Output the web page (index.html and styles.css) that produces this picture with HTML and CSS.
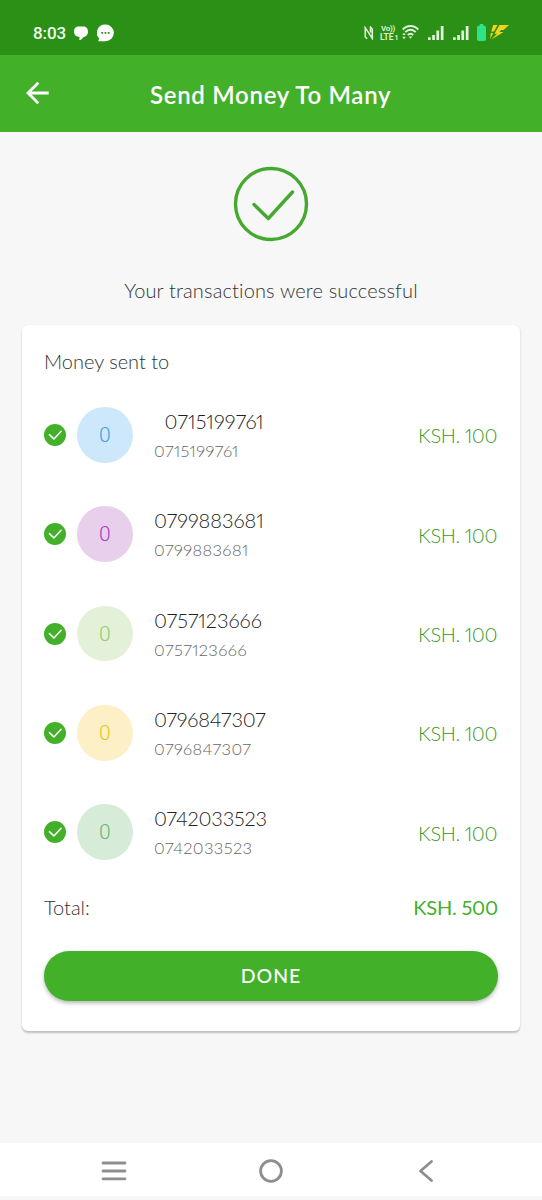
FILE: index.html
```html
<!DOCTYPE html>
<html lang="en">
<head>
<meta charset="utf-8">
<title>Send Money To Many</title>
<link rel="stylesheet" href="styles.css">
</head>
<body>
<svg width="0" height="0" class="defs">
  <symbol id="tick" viewBox="0 0 22 22"><circle cx="11" cy="11" r="11" fill="#43b02a"/><path d="M5.400 10.600l4.500 4.300 7.200-7.600" fill="none" stroke="#fff" stroke-width="1.500" stroke-linecap="round" stroke-linejoin="round"/></symbol>
  <symbol id="signal" viewBox="0 0 16 15"><path d="M0 11.300h2.700V14H0zM4.200 9h2.700v5H4.200zM8.400 4.600h2.700V14H8.400zM12.800 0h2.700v14h-2.700z" fill="#e2f5dc"/></symbol>
</svg>
<header class="status">
  <span class="clock">8:03</span>
  <svg class="bubble" width="14" height="15" viewBox="0 0 14 15"><path d="M4.200.4h5.400C12.500.4 14 2.800 14 5.700s-1.600 5-4.500 5.200c-1 1.600-2.200 2.600-3.500 3.200-.5.200-.8-.1-.7-.6l.3-2.500C2 10.700 0 8.700 0 5.700S1.500.4 4.200.4z" fill="#fff"/></svg>
  <svg class="chat" width="17" height="18" viewBox="0 0 17 18"><path d="M8.500.5a8.300 8.300 0 1 1 0 16.700H1.700c-.6 0-.6-.5-.3-.9l.8-1.700A8.300 8.300 0 0 1 8.500.500z" fill="#fff"/><path d="M4.300 8h1.800v1.800H4.300zM7.600 8h1.800v1.800H7.600zM10.800 8h1.800v1.800h-1.800z" fill="#2b9116"/></svg>
  <svg class="nfc" width="10" height="14" viewBox="0 0 10 14"><path d="M3.200 12.800L1.200 11V1.700L8.300 12.300V3L6.500 1.200V6.500" fill="none" stroke="#e2f5dc" stroke-width="1.500"/></svg>
  <span class="volte"><span class="vo">Vo))</span><span class="lte">LTE<small>1</small></span></span>
  <svg class="wifi" width="17" height="15" viewBox="0 0 17 15"><g fill="none" stroke="#e2f5dc" stroke-width="1.900"><path d="M.7 4.500C5-.2 12-.2 16.300 4.500M3.300 7.200c3-3.200 7.400-3.200 10.400 0M5.800 10c1.600-1.700 3.800-1.700 5.400 0"/></g><path d="M6.700 11.500h3.600l-1.800 2.300zM2 7.700l1.800 2.400H.3zM2 14.300L.3 11.800h3.500z" fill="#e2f5dc"/></svg>
  <svg class="sig1" width="16" height="15"><use href="#signal"/></svg>
  <svg class="sig2" width="16" height="15"><use href="#signal"/></svg>
  <svg class="battery" width="9" height="17" viewBox="0 0 9 17"><path d="M2.700 0h3.600v1.500C8 1.500 9 2.200 9 3.500V15c0 1.300-.7 2-2 2H2c-1.300 0-2-.7-2-2V3.500c0-1.300 1-2 2.700-2z" fill="#2ee388"/></svg>
  <svg class="bolt" width="20" height="15" viewBox="0 0 20 15"><path d="M3.200 0h4.300L4 6.500H1.200zM9.500 0H19l-5.500 5h-2.500L9.500 7h4L1.500 14.500 7 8.800H4.500zM.8 8h2.500L.2 14z" fill="#f5d21c"/></svg>
</header>
<div class="appbar">
  <svg class="back" width="24" height="24" viewBox="0 0 24 24"><path d="M22.700 12H2.500M12.300 1.800L2 12l10.300 10.200" fill="none" stroke="#fff" stroke-width="2.800"/></svg>
  <h1>Send Money To Many</h1>
</div>
<main>
  <svg class="done-mark" width="76" height="76" viewBox="0 0 76 76"><g fill="none" stroke="#45a92f" stroke-width="3.400" stroke-linecap="round" stroke-linejoin="round"><circle cx="38" cy="38" r="35.500"/><path d="M21 38.500l14.300 14L59.500 26"/></g></svg>
  <p class="message">Your transactions were successful</p>
  <section class="card">
    <h2>Money sent to</h2>
    <ul>
      <li><svg class="tick"><use href="#tick"/></svg><b class="avatar blue">0</b><div class="who"><span class="name indented">0715199761</span><span class="phone">0715199761</span></div><span class="amount">KSH. 100</span></li>
      <li><svg class="tick"><use href="#tick"/></svg><b class="avatar purple">0</b><div class="who"><span class="name">0799883681</span><span class="phone">0799883681</span></div><span class="amount">KSH. 100</span></li>
      <li><svg class="tick"><use href="#tick"/></svg><b class="avatar lime">0</b><div class="who"><span class="name">0757123666</span><span class="phone">0757123666</span></div><span class="amount">KSH. 100</span></li>
      <li><svg class="tick"><use href="#tick"/></svg><b class="avatar yellow">0</b><div class="who"><span class="name tight">0796847307</span><span class="phone">0796847307</span></div><span class="amount">KSH. 100</span></li>
      <li><svg class="tick"><use href="#tick"/></svg><b class="avatar green">0</b><div class="who"><span class="name tight">0742033523</span><span class="phone">0742033523</span></div><span class="amount">KSH. 100</span></li>
    </ul>
    <div class="total"><span>Total:</span><span class="sum">KSH. 500</span></div>
    <button>DONE</button>
  </section>
</main>
<nav>
  <svg width="26" height="22" viewBox="0 0 26 22"><path d="M2 3h22M2 11h22M2 18.800h22" stroke="#8e8e8e" stroke-width="2.800" stroke-linecap="round"/></svg>
  <svg width="24" height="24" viewBox="0 0 24 24"><circle cx="12" cy="12" r="10.400" fill="none" stroke="#8e8e8e" stroke-width="2.800"/></svg>
  <svg width="16" height="24" viewBox="0 0 16 24"><path d="M13.500 2.500L2.500 12l11 9.500" fill="none" stroke="#8e8e8e" stroke-width="2.800" stroke-linecap="round" stroke-linejoin="round"/></svg>
</nav>
</body>
</html>
```
FILE: styles.css
```css
* { box-sizing: border-box; margin: 0; padding: 0; }
body { width: 542px; height: 1200px; display: flex; flex-direction: column; overflow: hidden; background: #f7f7f7; color: #333; font-family: Lato, "Open Sans", sans-serif; font-weight: 300; font-variant-ligatures: none; font-variant-numeric: proportional-nums; }
svg { display: block; flex: none; }
.defs { display: none; }
.status { height: 55px; flex: none; background: #2b9116; display: flex; align-items: flex-start; padding-left: 33px; }
.clock { width: 41px; margin-top: 23px; font: 500 17px/20px Roboto, sans-serif; color: #f2fbef; letter-spacing: -.1px; }
.bubble { margin-top: 26px; }
.chat { margin: 24px 0 0 9px; }
.nfc { margin: 26px 0 0 250px; }
.volte { display: flex; flex-direction: column; width: 19px; margin: 25px 0 0 6px; font-family: Roboto, sans-serif; font-weight: 600; color: #e2f5dc; white-space: nowrap; }
.vo { font-size: 8px; line-height: 8px; padding-left: 1px; letter-spacing: -.3px; }
.lte { font-size: 8.500px; line-height: 8px; }
.lte small { font-size: 7px; margin-left: 1px; }
.wifi { margin: 25px 0 0 3px; }
.sig1 { margin: 26px 0 0 9px; }
.sig2 { margin: 26px 0 0 9px; }
.battery { margin: 24px 0 0 8px; }
.bolt { margin: 25px 0 0 4px; }
.appbar { height: 77px; flex: none; background: #43b02a; display: flex; align-items: flex-start; padding: 26px 0 0 26px; color: #fff; }
h1 { margin-left: 100px; font-size: 24px; line-height: 28px; font-weight: 600; white-space: nowrap; letter-spacing: .7px; }
main { flex: 1; display: flex; flex-direction: column; align-items: center; padding-top: 34px; }
.message { margin-top: 34px; height: 28px; font-size: 20px; line-height: 28px; white-space: nowrap; letter-spacing: .15px; }
.card { width: 498px; height: 706px; margin-top: 21px; padding: 21px 22px; background: #fff; border-radius: 6px; box-shadow: 0 1.500px 2px rgba(0,0,0,.22); }
h2 { font-size: 20px; line-height: 30px; font-weight: 300; height: 39.300px; white-space: nowrap; }
ul { list-style: none; }
li { height: 99.300px; display: flex; align-items: center; }
.tick { width: 22px; height: 22px; }
.avatar { width: 55.500px; height: 55.500px; margin-left: 11px; border-radius: 50%; font: 300 21px/56px Roboto, sans-serif; text-align: center; }
.blue { background: #cde8fb; color: #42a0e4; }
.purple { background: #e8d0ed; color: #a93dbf; }
.lime { background: #e3f1d8; color: #94cb72; }
.yellow { background: #fdf0c7; color: #e6c620; }
.green { background: #d6ecd8; color: #68b874; }
.who { margin: 3px 0 0 21.500px; display: flex; flex-direction: column; color: #222; }
.name { font-size: 20px; line-height: 30px; }
.indented { margin-left: 10.500px; letter-spacing: .15px; }
.tight { letter-spacing: -.15px; }
.phone { font-size: 16.500px; line-height: 31px; color: #666; letter-spacing: .4px; }
.amount { margin: 1px 1px 0 auto; font-size: 20px; color: #35991f; white-space: nowrap; letter-spacing: -.4px; }
.total { height: 69px; display: flex; justify-content: space-between; padding-top: 10px; font-size: 20px; line-height: 30px; }
.sum { color: #43b02a; font-weight: 400; letter-spacing: -.2px; }
button { display: block; width: 454px; height: 50px; border: 0; border-radius: 25px; background: #43b02a; color: #fff; font: 500 19.500px/48px Lato, sans-serif; letter-spacing: 1px; box-shadow: 0 2px 4px rgba(0,0,0,.3); }
nav { height: 57px; flex: none; background: #fff; border-bottom: 4px solid #f7f7f7; display: flex; align-items: center; padding: 3px 0 0 101px; }
nav svg:nth-child(2) { margin-left: 132px; }
nav svg:nth-child(3) { margin-left: 135px; }
```
